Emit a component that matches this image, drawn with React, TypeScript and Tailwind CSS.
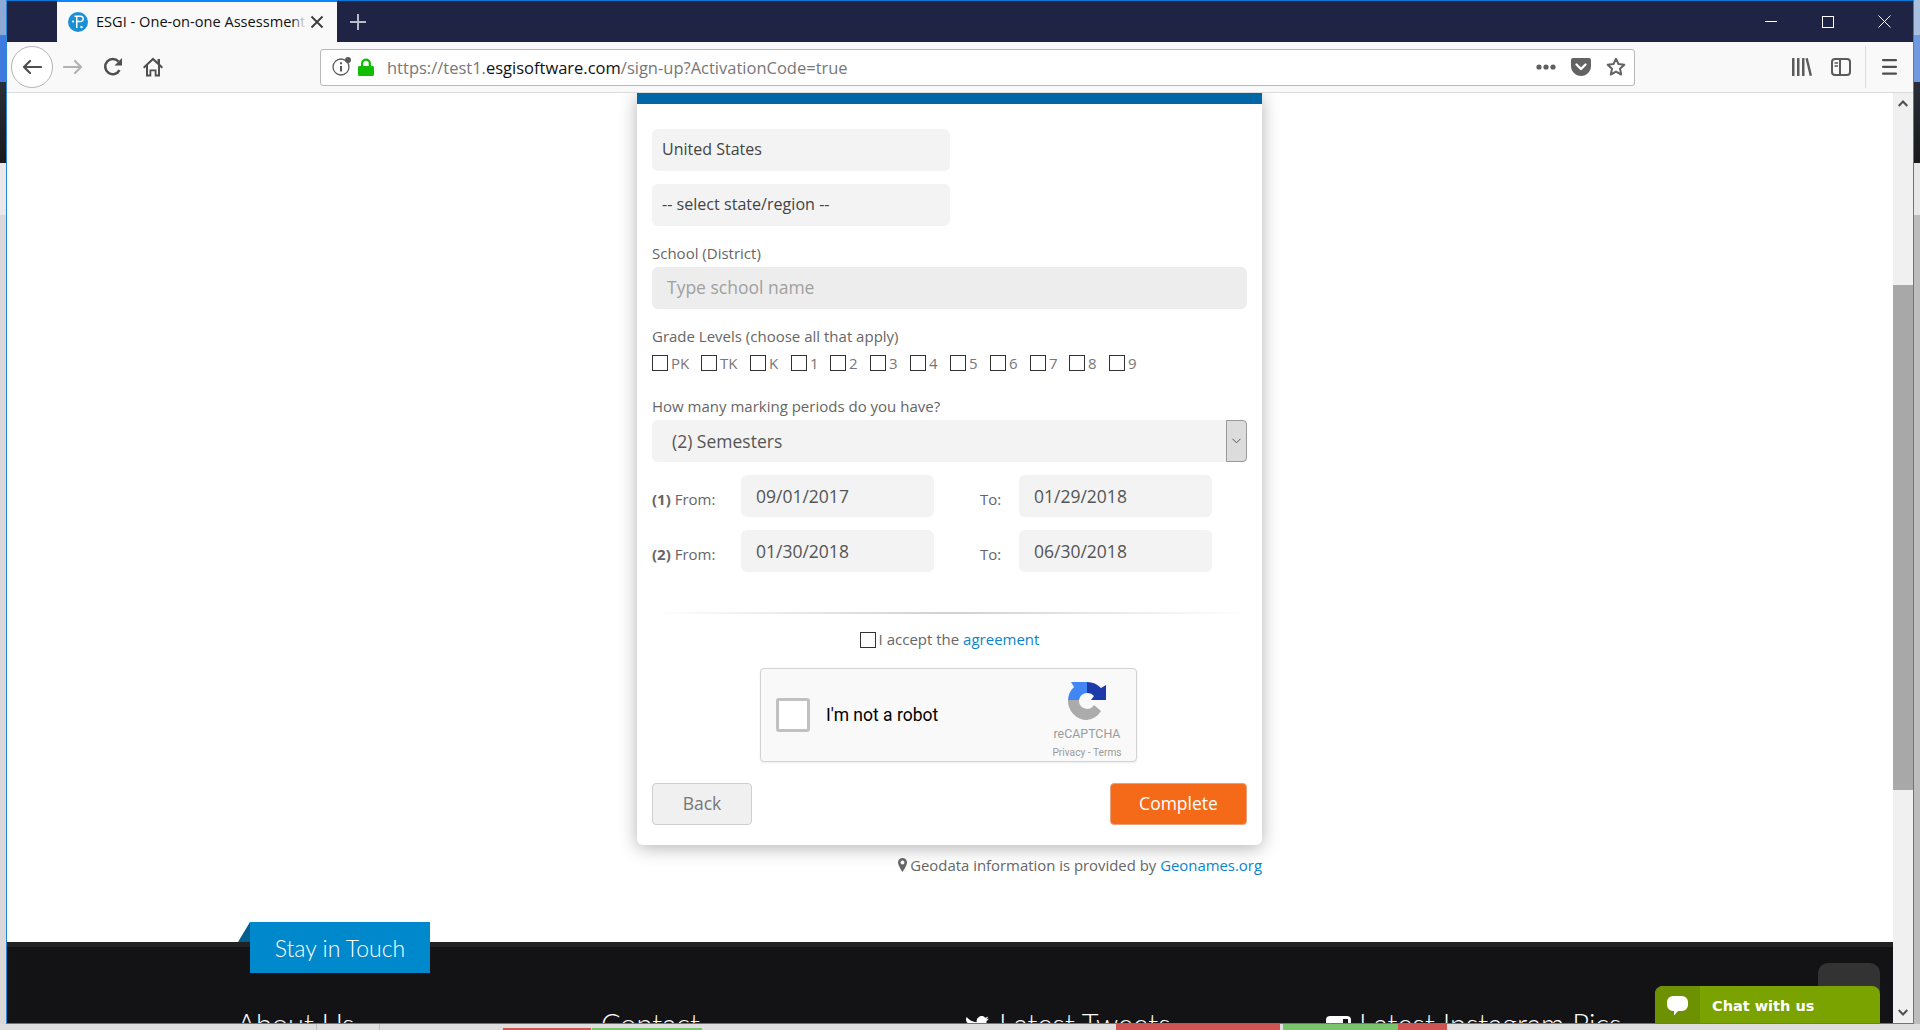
import React from "react";

const sans = "font-['Open_Sans',sans-serif]";

const grades = [
  { t: "PK", w: "w-[49px]" },
  { t: "TK", w: "w-[49px]" },
  { t: "K", w: "w-[41px]" },
  { t: "1", w: "w-[39px]" },
  { t: "2", w: "w-[40px]" },
  { t: "3", w: "w-[40px]" },
  { t: "4", w: "w-[40px]" },
  { t: "5", w: "w-[40px]" },
  { t: "6", w: "w-[40px]" },
  { t: "7", w: "w-[39px]" },
  { t: "8", w: "w-[40px]" },
  { t: "9", w: "w-[40px]" },
];

function Box() {
  return <span className="block w-4 h-4 shrink-0 border border-[#333] bg-white" />;
}

function Favicon() {
  return (
    <svg width="20" height="20" viewBox="0 0 20 20">
      <circle cx="10" cy="10" r="10" fill="#1b8fd6" />
      <path d="M6.500 3.500h6c2.200 0 3.500 1.400 3.500 3.300s-1.300 3.400-3.500 3.400h-3V16H8V5H6.500z M9.500 5v3.800h3c1.200 0 2-.8 2-1.900S13.700 5 12.500 5z" fill="#fff" />
      <circle cx="13.500" cy="15" r="1.200" fill="#fff" />
      <circle cx="5" cy="9.500" r="1.100" fill="#fff" />
    </svg>
  );
}

function Recaptcha() {
  return (
    <svg width="38" height="38" viewBox="0 0 38 38">
      <path d="M19 0A19 19 0 0 1 33 6L38 3V18H23L26 14A8 8 0 0 0 19 11Z" fill="#1c3aa9" />
      <path d="M19 0V11A8 8 0 0 0 11 18H0A19 19 0 0 1 6 5L3 0Z" fill="#4285f4" />
      <path d="M0 18H11A8 8 0 0 0 19 27A8 8 0 0 0 26 23L33 29A19 19 0 0 1 19 38A19 19 0 0 1 0 18Z" fill="#ababab" />
    </svg>
  );
}

function TitleBar() {
  return (
    <div className="h-[42px] shrink-0 bg-[#1f2444] border-t border-[#0a78d8] flex items-stretch">
      <div className="w-[50px]" />
      <div className="relative w-[280px] bg-[#f9f9fa] border-t-2 border-[#0a84ff] flex items-center pl-[11px] -mt-px">
        <Favicon />
        <span className={`ml-2 w-[209px] overflow-hidden whitespace-nowrap text-[14.600px] text-[#111] ${sans}`}>
          ESGI - One-on-one Assessment
        </span>
        <span className="absolute left-[235px] top-0 bottom-0 w-[14px] bg-gradient-to-r from-transparent to-[#f9f9fa]" />
        <svg className="ml-[5px]" width="14" height="14" viewBox="0 0 14 14" stroke="#3a3a3c" strokeWidth="1.8">
          <path d="M1.500 1.500l11 11M12.500 1.500l-11 11" />
        </svg>
      </div>
      <div className="ml-[13px] flex items-center">
        <svg width="16" height="16" viewBox="0 0 16 16" stroke="#b9bbc6" strokeWidth="2">
          <path d="M8 0v16M0 8h16" />
        </svg>
      </div>
      <div className="flex-1" />
      <div className="flex items-center">
        <svg width="12" height="2" viewBox="0 0 12 2" fill="#fff">
          <rect width="12" height="1" />
        </svg>
        <svg className="ml-[45px]" width="12" height="12" viewBox="0 0 12 12" fill="none" stroke="#fff">
          <rect x=".5" y=".5" width="11" height="11" />
        </svg>
        <svg className="ml-[44px] mr-[22px]" width="13" height="13" viewBox="0 0 13 13" stroke="#fff">
          <path d="M.5.5l12 12M12.500.5l-12 12" />
        </svg>
      </div>
    </div>
  );
}

function NavBar() {
  return (
    <div className="h-[51px] shrink-0 bg-[#f9f9fa] border-b border-[#dcdcdc] flex items-center">
      <div className="ml-[4px] w-[42px] h-[42px] rounded-full border border-[#b5b5b5] bg-white flex items-center justify-center">
        <svg width="20" height="16" viewBox="0 0 20 16" fill="none" stroke="#4f4f50" strokeWidth="2.200" strokeLinecap="round" strokeLinejoin="round">
          <path d="M19 8H2M8 2L2 8l6 6" />
        </svg>
      </div>
      <svg className="ml-[10px]" width="20" height="16" viewBox="0 0 20 16" fill="none" stroke="#b1b1b3" strokeWidth="2.200" strokeLinecap="round" strokeLinejoin="round">
        <path d="M1 8h17M12 2l6 6-6 6" />
      </svg>
      <svg className="ml-[20px]" width="20" height="20" viewBox="0 0 20 20" fill="none" stroke="#4f4f50" strokeWidth="2.600">
        <path d="M16.500 13.200A7.600 7.600 0 1 1 15.500 4.500" />
        <path d="M19 1v7.500h-7.500z" fill="#4f4f50" stroke="none" />
      </svg>
      <svg className="ml-[20px]" width="20" height="20" viewBox="0 0 20 20" fill="#4f4f50">
        <path d="M10 0.500L0 10l1.300 1.500L3 10v9.500h5.300v-5.200h3.400v5.200H17V10l1.700 1.500L20 10l-3-2.900V2h-2.500v2.700zM10 3.400l5 4.700v9.400h-1.500v-5h-7v5H5V8.100z" />
      </svg>
      <div className="ml-[157px] w-[1315px] h-[37px] rounded-[3px] border border-[#b8b8b8] bg-white flex items-center">
        <div className="relative ml-[11px] w-[18px] h-[18px]">
          <svg width="18" height="18" viewBox="0 0 18 18" fill="none" stroke="#5a5a5b" strokeWidth="1.300">
            <circle cx="9" cy="9" r="8" />
            <path d="M9 8v5.500" strokeWidth="2" />
            <path d="M9 4.200v2" strokeWidth="2" />
          </svg>
          <span className="absolute -right-[1px] -top-[1px] w-[6px] h-[6px] rounded-full bg-[#5a5a5b]" />
        </div>
        <svg className="ml-[8px]" width="16" height="18" viewBox="0 0 16 18" fill="#12bc00">
          <path d="M3 8V5.500a5 5 0 0 1 10 0V8h1.500c.8 0 1.500.7 1.500 1.500V16.500c0 .8-.7 1.500-1.500 1.500h-13C.7 18 0 17.300 0 16.500v-7C0 8.700.7 8 1.500 8zM5.300 8h5.400V5.500a2.700 2.700 0 0 0-5.400 0z" />
        </svg>
        <span className={`ml-[13px] pt-[2px] text-[16.500px] whitespace-nowrap text-[#777] ${sans}`}>
          https://test1.<span className="text-[#111]">esgisoftware.com</span>/sign-up?ActivationCode=true
        </span>
        <div className="flex-1" />
        <svg width="20" height="6" viewBox="0 0 20 6" fill="#5f5f60">
          <circle cx="3" cy="3" r="2.600" />
          <circle cx="10" cy="3" r="2.600" />
          <circle cx="17" cy="3" r="2.600" />
        </svg>
        <svg className="ml-[15px]" width="20" height="18" viewBox="0 0 20 18">
          <path d="M2 0h16c1.100 0 2 .9 2 2v6c0 5.500-4.500 10-10 10S0 13.500 0 8V2C0 .9.900 0 2 0z" fill="#636364" />
          <path d="M5.500 6.500L10 11l4.500-4.500" fill="none" stroke="#fff" strokeWidth="2.400" strokeLinecap="round" strokeLinejoin="round" />
        </svg>
        <svg className="ml-[15px] mr-[8px]" width="20" height="20" viewBox="0 0 20 20" fill="none" stroke="#636364" strokeWidth="2" strokeLinejoin="round">
          <path d="M10 1.800l2.500 5.300 5.800.7-4.300 4 1.200 5.700L10 14.700l-5.200 2.800L6 11.800l-4.300-4 5.800-.7z" />
        </svg>
      </div>
      <svg className="ml-[157px]" width="20" height="18" viewBox="0 0 20 18" fill="#5a5a5b">
        <rect x="0" y="0" width="2.500" height="18" rx=".6" />
        <rect x="5" y="0" width="2.500" height="18" rx=".6" />
        <rect x="10" y="0" width="2.500" height="18" rx=".6" />
        <path d="M13.500 .5l2.300-.5L20 17.500l-2.300.5z" />
      </svg>
      <svg className="ml-[19px]" width="20" height="18" viewBox="0 0 20 18" fill="none" stroke="#5a5a5b" strokeWidth="2">
        <rect x="1" y="1" width="18" height="16" rx="3" />
        <path d="M9 1v16" />
        <path d="M3.500 5H7M3.500 8H7" strokeWidth="1.400" />
      </svg>
      <div className="ml-[14px] w-px h-[42px] bg-[#dcdcdc]" />
      <svg className="ml-[16px]" width="15" height="16" viewBox="0 0 15 16" fill="#4f4f50">
        <rect y="0" width="15" height="2.200" rx="1" />
        <rect y="6.800" width="15" height="2.200" rx="1" />
        <rect y="13.600" width="15" height="2.200" rx="1" />
      </svg>
    </div>
  );
}

function Card() {
  const field = "bg-[#f3f3f3] rounded-[6px] flex items-center";
  return (
    <div className={`ml-[630px] w-[625px] bg-white rounded-b-[6px] shadow-[0_3px_18px_rgba(0,0,0,0.3)] pb-[20px] ${sans}`}>
      <div className="h-[11px] bg-[#0066a5]" />
      <div className="px-[15px]">
        <div className={`mt-[25px] w-[298px] h-[42px] px-[10px] pb-[2px] text-[16px] text-[#444] ${field}`}>United States</div>
        <div className={`mt-[13px] w-[298px] h-[42px] px-[10px] pb-[2px] text-[16.100px] text-[#444] ${field}`}>-- select state/region --</div>
        <div className="mt-[17px] h-[20px] leading-[20px] text-[15px] text-[#666]">School (District)</div>
        <div className={`mt-[4px] w-[595px] h-[42px] px-[15px] pb-[1px] text-[17.500px] text-[#a0a0a0] !bg-[#ededed] ${field}`}>Type school name</div>
        <div className="mt-[17px] h-[20px] leading-[20px] text-[15px] text-[#666]">Grade Levels (choose all that apply)</div>
        <div className="mt-[9px] h-[16px] flex">
          {grades.map((g) => (
            <div key={g.t} className={`${g.w} flex items-center gap-[3px] text-[15px] text-[#777]`}>
              <Box />
              <span>{g.t}</span>
            </div>
          ))}
        </div>
        <div className="mt-[25px] h-[20px] leading-[20px] text-[15px] text-[#666]">How many marking periods do you have?</div>
        <div className={`mt-[4px] w-[595px] h-[42px] pl-[20px] text-[17.500px] text-[#555] justify-between ${field}`}>
          <span>(2) Semesters</span>
          <span className="w-[21px] h-[42px] rounded-r-[4px] bg-[#dcdcdc] border border-[#999] flex items-center justify-center">
            <svg width="9" height="6" viewBox="0 0 9 6" fill="none" stroke="#555">
              <path d="M.5.800L4.500 4.800 8.500.800" />
            </svg>
          </span>
        </div>
        {[
          { n: "(1)", a: "09/01/2017", b: "01/29/2018" },
          { n: "(2)", a: "01/30/2018", b: "06/30/2018" },
        ].map((r) => (
          <div key={r.n} className="mt-[13px] h-[42px] flex items-center">
            <span className="w-[89px] pt-[6px] text-[15px] text-[#666]">
              <b className="font-bold">{r.n}</b> From:
            </span>
            <span className={`w-[193px] h-[42px] px-[15px] text-[17.500px] text-[#555] ${field}`}>{r.a}</span>
            <span className="ml-[46px] w-[39px] pt-[6px] text-[15px] text-[#666]">To:</span>
            <span className={`w-[193px] h-[42px] px-[15px] text-[17.500px] text-[#555] ${field}`}>{r.b}</span>
          </div>
        ))}
        <div className="mt-[40px] h-[2px] bg-gradient-to-r from-transparent via-[#d0d0d0] to-transparent" />
        <div className="mt-[18px] h-[16px] flex items-center justify-center gap-[3px] text-[15px] text-[#666]">
          <Box />
          <span className="pb-[2px]">
            I accept the <span className="text-[#0b84cc]">agreement</span>
          </span>
        </div>
        <div className="mt-[20px] ml-[108px] w-[377px] h-[94px] bg-[#f9f9f9] border border-[#d3d3d3] rounded-[4px] shadow-[0_1px_2px_rgba(0,0,0,0.08)] flex items-center font-['Roboto',sans-serif]">
          <span className="ml-[15px] w-[34px] h-[34px] bg-white border-[3px] border-[#c1c1c1] rounded-[3px]" />
          <span className="ml-[16px] text-[17.500px] text-black">I'm not a robot</span>
          <div className="ml-auto mr-[14px] w-[70px] h-full flex flex-col items-center pt-[13px]">
            <Recaptcha />
            <span className="mt-[7px] text-[12.400px] leading-[14px] text-[#9b9b9b]">reCAPTCHA</span>
            <span className="mt-[6px] whitespace-nowrap text-[10.200px] leading-[12px] text-[#9b9b9b]">Privacy - Terms</span>
          </div>
        </div>
        <div className="mt-[21px] flex justify-between">
          <div className="w-[100px] h-[42px] pb-[2px] bg-[#f0f0f0] border border-[#cfcfcf] rounded-[4px] flex items-center justify-center text-[17.500px] text-[#777]">Back</div>
          <div className="w-[137px] h-[42px] pb-[2px] bg-[#f56a18] border border-[#e8a27a] rounded-[4px] flex items-center justify-center text-[17.500px] text-white">Complete</div>
        </div>
      </div>
    </div>
  );
}

function Footer() {
  const head = "text-[29px] leading-[40px] font-light text-white font-['Lato',sans-serif] whitespace-nowrap";
  return (
    <div className="relative mt-[67px] flex-1 bg-[#131315] border-t-[5px] border-[#222222] pt-[57px] flex">
      <div className="absolute left-[243px] -top-[25px] w-[180px] h-[51px] pt-[2px] bg-[#0088cc] flex items-center justify-center text-white text-[23px] font-light font-['Lato',sans-serif]">
        Stay in Touch
      </div>
      <div className="absolute left-[231px] -top-[25px] w-[12px] h-[20px] bg-[#005f8f] [clip-path:polygon(100%_0,100%_100%,0_100%)]" />
      <span className={`ml-[230px] w-[364px] ${head}`}>About Us</span>
      <span className={`w-[364px] ${head}`}>Contact</span>
      <svg className="mt-[12px]" width="24" height="20" viewBox="0 0 24 20" fill="#fff">
        <path d="M24 2.400a10 10 0 0 1-2.800.8A5 5 0 0 0 23.300.5a10 10 0 0 1-3.100 1.200 4.900 4.900 0 0 0-8.400 4.500A14 14 0 0 1 1.700.9a4.900 4.900 0 0 0 1.500 6.600 5 5 0 0 1-2.200-.6 4.900 4.900 0 0 0 3.900 4.900 5 5 0 0 1-2.200.1 4.900 4.900 0 0 0 4.600 3.400A9.900 9.900 0 0 1 0 17.400 14 14 0 0 0 21.500 5a10 10 0 0 0 2.500-2.600z" />
      </svg>
      <span className={`ml-[10px] w-[327px] ${head}`}>Latest Tweets</span>
      <svg className="mt-[12px]" width="25" height="25" viewBox="0 0 25 25" fill="#fff">
        <path d="M4 0h17a4 4 0 0 1 4 4v17a4 4 0 0 1-4 4H4a4 4 0 0 1-4-4V4a4 4 0 0 1 4-4zm13 3v6h5V3zM12.500 8a4.500 4.500 0 1 0 0 9 4.500 4.500 0 0 0 0-9z" fillRule="evenodd" />
      </svg>
      <span className={`ml-[8px] ${head}`}>Latest Instagram Pics</span>
    </div>
  );
}

function Scrollbar() {
  return (
    <div className="w-[20px] shrink-0 bg-[#f0f0f0] flex flex-col items-center">
      <svg className="mt-[7px]" width="10" height="7" viewBox="0 0 10 7" fill="none" stroke="#505050" strokeWidth="2">
        <path d="M.7 6L5 1.500 9.300 6" />
      </svg>
      <div className="mt-[178px] w-full h-[505px] bg-[#a8a8a8]" />
      <div className="flex-1" />
      <svg className="mb-[7px]" width="10" height="7" viewBox="0 0 10 7" fill="none" stroke="#505050" strokeWidth="2">
        <path d="M.7 1L5 5.500 9.300 1" />
      </svg>
    </div>
  );
}

function SideStrip({ a, b, c, d, e }: { a: string; b: string; c: string; d: string; e: string }) {
  return (
    <div className="w-[6px] shrink-0 flex flex-col">
      <div className={`h-[35px] ${a}`} />
      <div className={`h-[47px] ${b}`} />
      <div className={`h-[81px] ${c}`} />
      <div className={`h-[52px] ${d}`} />
      <div className={`flex-1 ${e}`} />
    </div>
  );
}

export default function App() {
  return (
    <div className="w-[1920px] h-[1030px] overflow-hidden flex flex-col bg-[#e0e0e0]">
      <div className="h-[1024px] flex">
        <SideStrip a="bg-[#8fa9d6]" b="bg-[#3f7ade]" c="bg-gradient-to-b from-[#2a2e38] to-[#1a1a1c]" d="bg-[#e8e8e8]" e="bg-[#d8d8d8]" />
        <div className="w-[1908px] flex flex-col border-x border-[#2a84d8] border-b">
          <TitleBar />
          <NavBar />
          <div className="flex-1 min-h-0 flex bg-white">
            <div className="relative w-[1886px] flex flex-col overflow-hidden">
              <Card />
              <div className={`ml-[630px] mt-[10px] w-[625px] h-[20px] leading-[20px] flex items-center justify-end text-[14.900px] text-[#666] ${sans}`}>
                <svg className="mr-[3px]" width="9" height="14" viewBox="0 0 9 14" fill="#666">
                  <path d="M4.500 0A4.500 4.500 0 0 0 0 4.500C0 7.500 4.500 14 4.500 14S9 7.500 9 4.500A4.500 4.500 0 0 0 4.500 0zm0 6.500a2 2 0 1 1 0-4 2 2 0 0 1 0 4z" />
                </svg>
                Geodata information is provided by&nbsp;<span className="text-[#0b84cc]">Geonames.org</span>
              </div>
              <Footer />
              <div className="absolute left-[1811px] top-[870px] w-[62px] h-[30px] rounded-t-[10px] bg-[#333333]" />
              <div className="absolute left-[1648px] top-[893px] w-[225px] h-[44px] rounded-t-[8px] bg-[#7aa300] flex items-center overflow-hidden">
                <div className="w-[45px] h-full bg-[#6d9100] flex items-start justify-center pt-[10px]">
                  <svg width="21" height="20" viewBox="0 0 21 20" fill="#fff">
                    <path d="M6 0h9a6 6 0 0 1 6 6v3a6 6 0 0 1-6 6h-4l-4 4.500V15H6a6 6 0 0 1-6-6V6a6 6 0 0 1 6-6z" />
                  </svg>
                </div>
                <span className="ml-[12px] -mt-[3px] text-[14.500px] font-bold text-white font-['DejaVu_Sans',sans-serif] whitespace-nowrap">Chat with us</span>
              </div>
            </div>
            <Scrollbar />
          </div>
        </div>
        <SideStrip a="bg-[#a9bfe0]" b="bg-[#6f9ae0]" c="bg-gradient-to-b from-[#2a2e38] to-[#1a1a1c]" d="bg-[#e8e8e8]" e="bg-[#bdbdbd]" />
      </div>
      <div className="h-[6px] flex bg-[#dedede]">
        <div className="w-[317px] border-r border-[#bdbdbd]" />
        <div className="w-[63px] border-r border-[#bdbdbd]" />
        <div className="w-[123px]" />
        <div className="w-[88px] mt-[4px] bg-[#cf5555]" />
        <div className="w-[1px]" />
        <div className="w-[110px] mt-[4px] bg-[#7cc36e]" />
        <div className="w-[414px]" />
        <div className="w-[164px] bg-[#cf5555]" />
        <div className="w-[3px]" />
        <div className="w-[115px] bg-[#7cc36e]" />
        <div className="w-[49px] bg-[#cf5555]" />
      </div>
    </div>
  );
}
